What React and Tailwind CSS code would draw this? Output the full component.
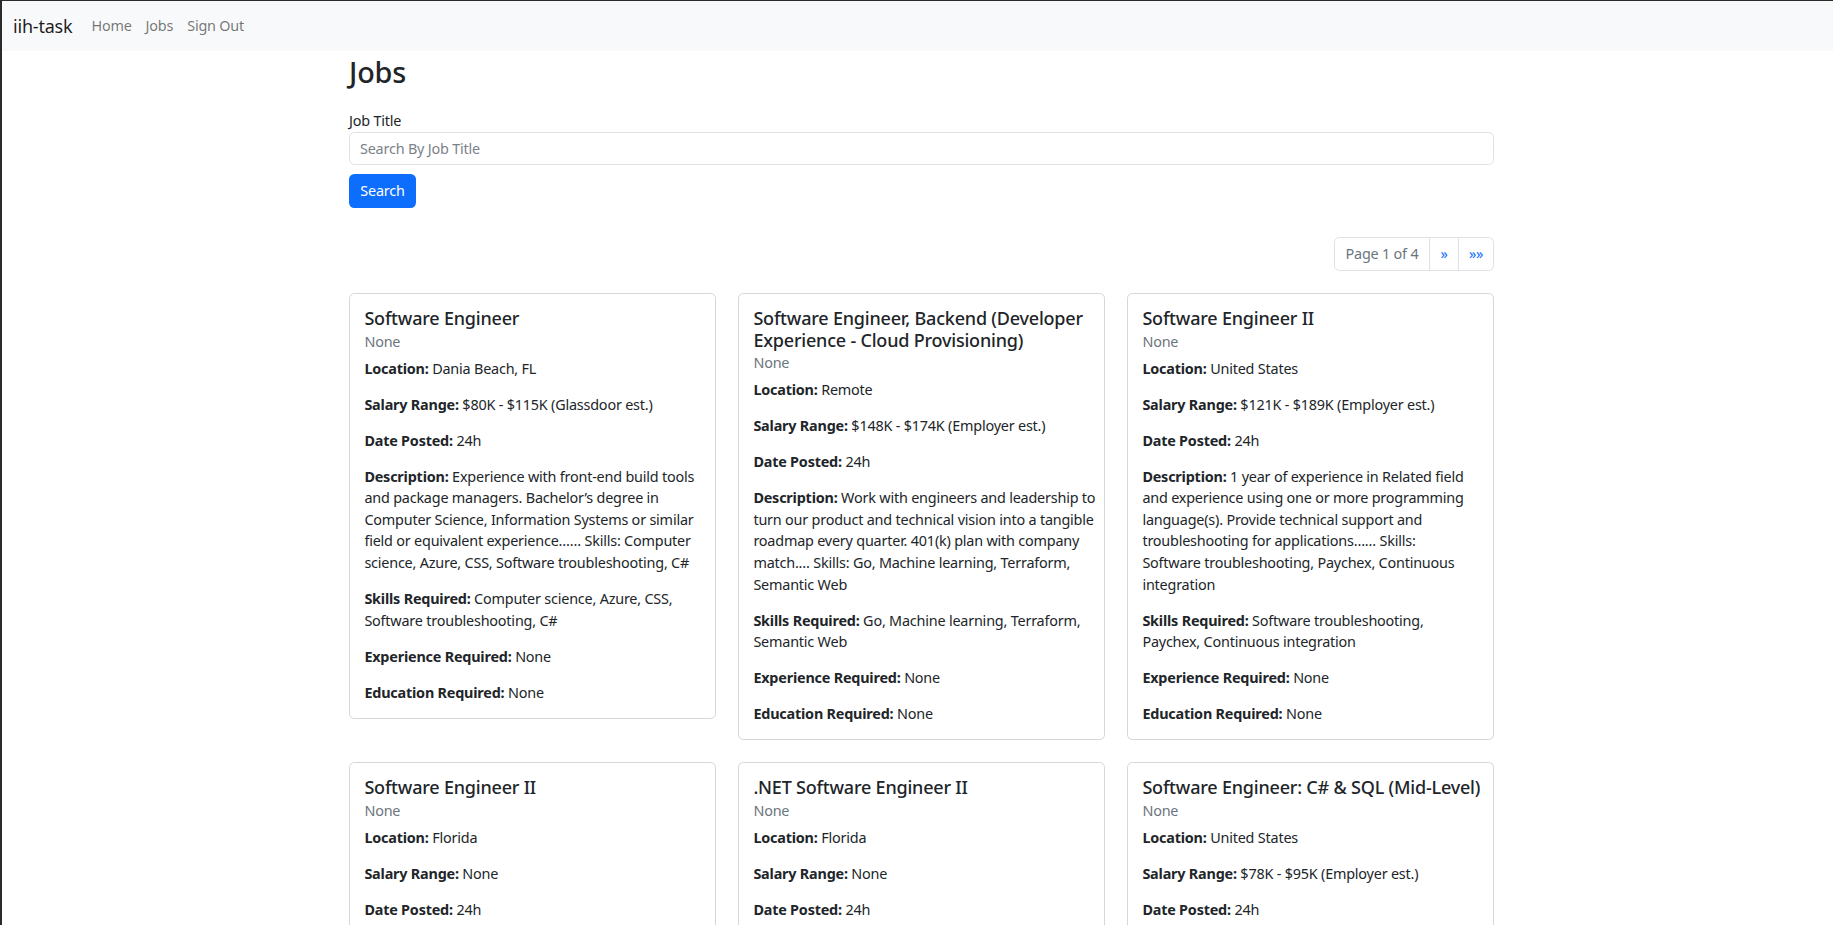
import React from "react";

const jobs = [
  {
    title: ["Software Engineer"],
    location: "Dania Beach, FL",
    salary: "$80K - $115K (Glassdoor est.)",
    date: "24h",
    description: [
      "Experience with front-end build tools",
      "and package managers. Bachelor’s degree in",
      "Computer Science, Information Systems or similar",
      "field or equivalent experience…… Skills: Computer",
      "science, Azure, CSS, Software troubleshooting, C#",
    ],
    skills: ["Computer science, Azure, CSS,", "Software troubleshooting, C#"],
  },
  {
    title: ["Software Engineer, Backend (Developer", "Experience - Cloud Provisioning)"],
    location: "Remote",
    salary: "$148K - $174K (Employer est.)",
    date: "24h",
    description: [
      "Work with engineers and leadership to",
      "turn our product and technical vision into a tangible",
      "roadmap every quarter. 401(k) plan with company",
      "match.… Skills: Go, Machine learning, Terraform,",
      "Semantic Web",
    ],
    skills: ["Go, Machine learning, Terraform,", "Semantic Web"],
  },
  {
    title: ["Software Engineer II"],
    location: "United States",
    salary: "$121K - $189K (Employer est.)",
    date: "24h",
    description: [
      "1 year of experience in Related field",
      "and experience using one or more programming",
      "language(s). Provide technical support and",
      "troubleshooting for applications…… Skills:",
      "Software troubleshooting, Paychex, Continuous",
      "integration",
    ],
    skills: ["Software troubleshooting,", "Paychex, Continuous integration"],
  },
  {
    title: ["Software Engineer II"],
    location: "Florida",
    salary: "None",
    date: "24h",
    description: [
      "Design, develop and maintain software",
      "applications. Collaborate with cross-functional",
      "teams…… Skills: Java, SQL, Git",
    ],
    skills: ["Java, SQL, Git"],
  },
  {
    title: [".NET Software Engineer II"],
    location: "Florida",
    salary: "None",
    date: "24h",
    description: [
      "Develop and maintain .NET applications",
      "and services. Experience with C# and",
      "ASP.NET…… Skills: .NET, C#, SQL",
    ],
    skills: [".NET, C#, SQL"],
  },
  {
    title: ["Software Engineer: C# & SQL (Mid-Level)"],
    location: "United States",
    salary: "$78K - $95K (Employer est.)",
    date: "24h",
    description: [
      "Build and support applications using C#",
      "and SQL Server. Work closely with product",
      "owners…… Skills: C#, SQL, Azure",
    ],
    skills: ["C#, SQL, Azure"],
  },
];

function Field({ label, lines, last }) {
  return (
    <p className={last ? "mb-0" : "mb-[14.4px]"}>
      {lines.map((line, i) => (
        <span key={i} className="block whitespace-nowrap">
          {i === 0 ? (
            <>
              <strong className="font-bold">{label}:</strong> {line}
            </>
          ) : (
            line
          )}
        </span>
      ))}
    </p>
  );
}

function JobCard({ job }) {
  return (
    <div className="border border-[#d6d6d6] rounded-[5.4px] bg-white">
      <div className="px-[14.4px] pt-[14px] pb-[14.4px]">
        <h5 className="text-[18px] leading-[21.6px] font-medium mb-[7.2px] text-[#212529]">
          {job.title.map((t, i) => (
            <span key={i} className="block whitespace-nowrap">
              {t}
            </span>
          ))}
        </h5>
        <h6 className="mt-[-4px] mb-[7.6px] text-[14.4px] leading-[17.28px] text-[#6c757d]">
          None
        </h6>
        <div className="text-[14.4px] leading-[21.6px] text-[#212529]">
          <Field label="Location" lines={[job.location]} />
          <Field label="Salary Range" lines={[job.salary]} />
          <Field label="Date Posted" lines={[job.date]} />
          <Field label="Description" lines={job.description} />
          <Field label="Skills Required" lines={job.skills} />
          <Field label="Experience Required" lines={["None"]} />
          <Field label="Education Required" lines={["None"]} last />
        </div>
      </div>
    </div>
  );
}

export default function App() {
  return (
    <div className="min-h-screen bg-white border-t border-l-2 border-[#2b2b2b] font-['Noto_Sans',sans-serif] tracking-[-0.2px] text-[#212529]">
      <nav className="bg-[#f8f9fa] h-[50px] flex items-center pl-[11px]">
        <a className="text-[18px] leading-[27px] text-black/90 mr-[12px]">iih-task</a>
        <a className="px-[7px] text-[14.4px] leading-[21.6px] text-black/55">Home</a>
        <a className="px-[7px] text-[14.4px] leading-[21.6px] text-black/55">Jobs</a>
        <a className="px-[7px] text-[14.4px] leading-[21.6px] text-black/55">Sign Out</a>
      </nav>

      <main className="ml-[347px] w-[1145px] pb-[40px]">
        <h2 className="mt-[4px] mb-[7.2px] text-[28.8px] leading-[34.56px] font-medium">Jobs</h2>

        <div className="mt-[20.4px]">
          <label className="block text-[14.4px] leading-[21.6px]">Job Title</label>
          <input
            type="text"
            placeholder="Search By Job Title"
            className="block w-full h-[33.5px] px-[10px] text-[14.4px] border border-[#dee2e6] rounded-[5.4px] placeholder:text-[#7b8289] outline-none"
          />
        </div>

        <button className="mt-[9px] h-[34px] w-[67px] rounded-[5.4px] bg-[#0d6efd] text-white text-[14.4px] leading-[21.6px]">
          Search
        </button>

        <div className="mt-[29px] flex justify-end">
          <div className="flex h-[34px] border border-[#dee2e6] rounded-[5.4px] text-[14.4px] leading-[21.6px]">
            <span className="w-[94px] flex items-center justify-center text-[#6c757d]">Page 1 of 4</span>
            <span className="w-[29px] flex items-center justify-center border-l border-[#dee2e6] text-[#0d6efd]">»</span>
            <span className="w-[35px] flex items-center justify-center border-l border-[#dee2e6] text-[#0d6efd]">»»</span>
          </div>
        </div>

        <div className="mt-[22px] grid grid-cols-3 gap-x-[22px] gap-y-[22px] items-start">
          {jobs.map((job, i) => (
            <JobCard key={i} job={job} />
          ))}
        </div>
      </main>
    </div>
  );
}
